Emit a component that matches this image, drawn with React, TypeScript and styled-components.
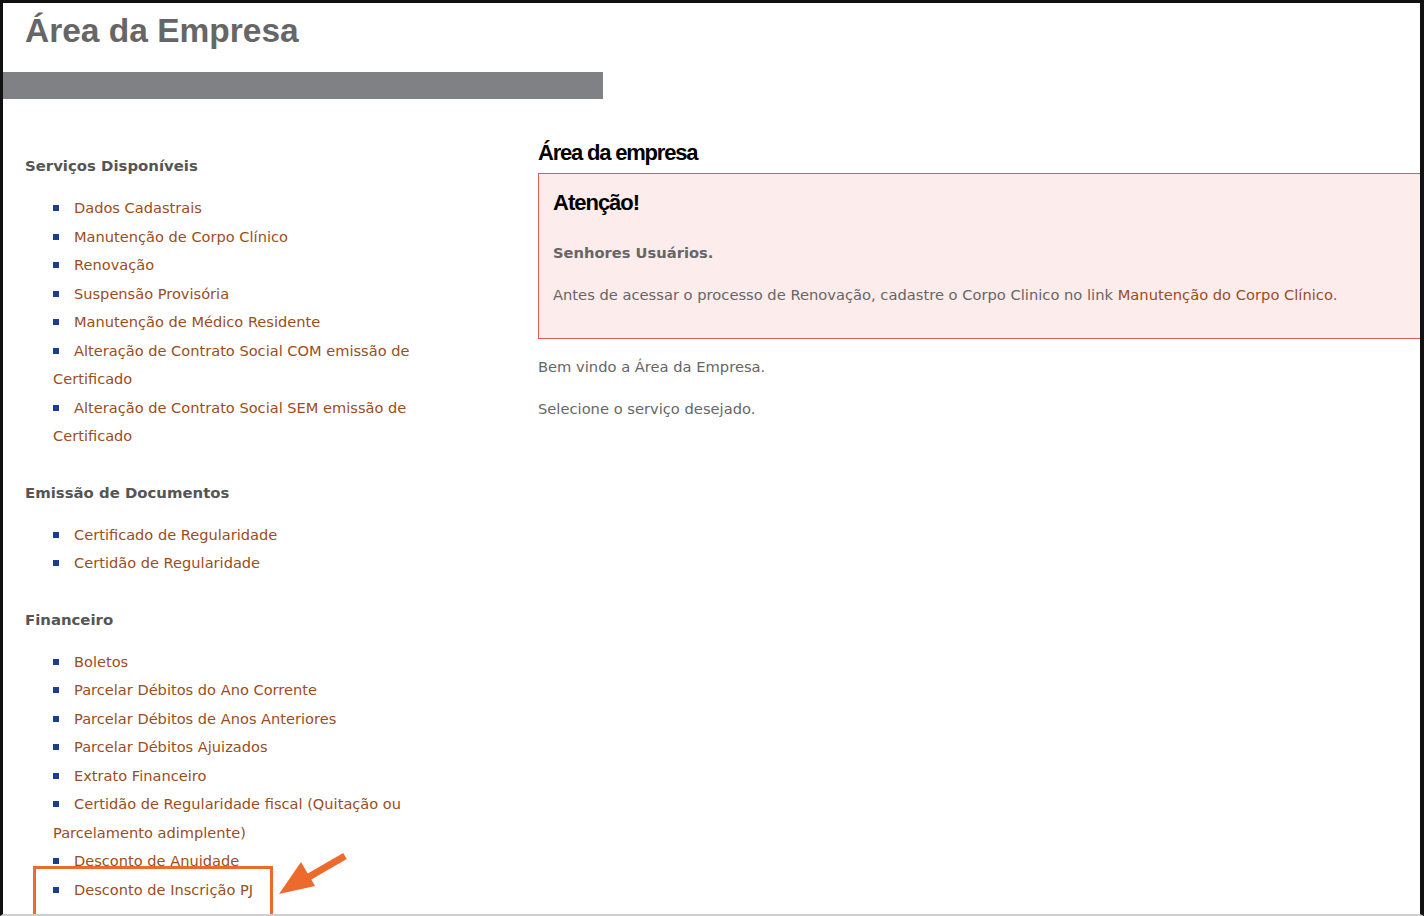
import React from 'react'
import styled, { createGlobalStyle } from 'styled-components'

const GlobalStyle = createGlobalStyle`
  html, body {
    margin: 0;
    padding: 0;
    background: #fff;
  }
`

const servicos = [
  'Dados Cadastrais',
  'Manutenção de Corpo Clínico',
  'Renovação',
  'Suspensão Provisória',
  'Manutenção de Médico Residente',
  'Alteração de Contrato Social COM emissão de Certificado',
  'Alteração de Contrato Social SEM emissão de Certificado',
]

const documentos = ['Certificado de Regularidade', 'Certidão de Regularidade']

const financeiro = [
  'Boletos',
  'Parcelar Débitos do Ano Corrente',
  'Parcelar Débitos de Anos Anteriores',
  'Parcelar Débitos Ajuizados',
  'Extrato Financeiro',
  'Certidão de Regularidade fiscal (Quitação ou Parcelamento adimplente)',
  'Desconto de Anuidade',
  'Desconto de Inscrição PJ',
]

const App = () => {
  return (
    <>
      <GlobalStyle />
      <Frame>
        <Header>
          <PageTitle>Área da Empresa</PageTitle>
          <GrayBar />
        </Header>

        <Columns>
          <Sidebar>
            <MenuSection title="Serviços Disponíveis" items={servicos} />
            <MenuSection title="Emissão de Documentos" items={documentos} />
            <MenuSection title="Financeiro" items={financeiro} />
          </Sidebar>

          <Content>
            <ContentTitle>Área da empresa</ContentTitle>
            <AlertBox>
              <AlertTitle>Atenção!</AlertTitle>
              <AlertStrong>Senhores Usuários.</AlertStrong>
              <Paragraph>
                Antes de acessar o processo de Renovação, cadastre o Corpo Clinico no link{' '}
                <Link href="#">Manutenção do Corpo Clínico</Link>.
              </Paragraph>
            </AlertBox>
            <Paragraph>Bem vindo a Área da Empresa.</Paragraph>
            <Paragraph>Selecione o serviço desejado.</Paragraph>
          </Content>
        </Columns>

        {/* destaque no item "Desconto de Inscrição PJ" */}
        <HighlightBox />
        <Arrow viewBox="0 0 80 50" width="80" height="50">
          <line x1="68" y1="4" x2="30" y2="26" stroke="#ec6a2c" strokeWidth="7" />
          <polygon points="2,42 24,10 38,34" fill="#ec6a2c" />
        </Arrow>
      </Frame>
    </>
  )
}

export default App

const MenuSection = ({ title, items }: { title: string; items: string[] }) => (
  <Section>
    <SectionTitle>{title}</SectionTitle>
    <Menu>
      {items.map((item) => (
        <MenuItem key={item}>
          <Link href="#">{item}</Link>
        </MenuItem>
      ))}
    </Menu>
  </Section>
)

const Frame = styled.div`
  position: relative;
  box-sizing: border-box;
  width: 1424px;
  height: 916px;
  border-top: 3px solid #111;
  border-left: 3px solid #111;
  border-right: 4px solid #111;
  border-bottom: 2px solid #cfcfcf;
  overflow: hidden;
  background: #fff;
`

const Header = styled.div`
  display: flex;
  flex-direction: column;
`

const PageTitle = styled.h1`
  margin: 0;
  padding: 5px 0 0 22px;
  height: 62px;
  box-sizing: border-box;
  font-family: 'Liberation Sans', Arial, sans-serif;
  font-weight: 700;
  font-size: 33.5px;
  line-height: 46px;
  color: #666;
`

const GrayBar = styled.div`
  margin-top: 7px;
  width: 600px;
  height: 27px;
  background: #808184;
`

const Columns = styled.div`
  display: grid;
  grid-template-columns: 535px 1fr;
`

const Sidebar = styled.div`
  padding: 53px 0 0 22px;
  display: flex;
  flex-direction: column;
  gap: 28px;
`

const Section = styled.div`
  display: flex;
  flex-direction: column;
`

const SectionTitle = styled.h3`
  margin: 0 0 14px;
  font-family: Tahoma, 'DejaVu Sans', Verdana, sans-serif;
  font-weight: 700;
  font-size: 14.9px;
  line-height: 28px;
  color: #555;
`

const Menu = styled.ul`
  margin: 0;
  padding: 0 0 0 28px;
  list-style: none;
  width: 382px;
`

const MenuItem = styled.li`
  font-family: Tahoma, 'DejaVu Sans', Verdana, sans-serif;
  font-size: 14.6px;
  line-height: 28.5px;

  &::before {
    content: '';
    display: inline-block;
    width: 6px;
    height: 6px;
    margin: 0 15px 2px 0;
    background: #1c3d8f;
    vertical-align: middle;
  }
`

const Link = styled.a`
  color: #9b4d22;
  text-decoration: none;
`

const Content = styled.div`
  padding-top: 39px;
  font-family: Tahoma, 'DejaVu Sans', Verdana, sans-serif;
  font-size: 14.7px;
  color: #666;
`

const ContentTitle = styled.h2`
  margin: 0 0 5px;
  font-family: 'Liberation Sans', Arial, sans-serif;
  font-weight: 700;
  font-size: 22px;
  letter-spacing: -1.2px;
  line-height: 30px;
  color: #000;
`

const AlertBox = styled.div`
  width: 920px;
  box-sizing: border-box;
  padding: 15px 14px 15px;
  margin-bottom: 14px;
  background: #fcecec;
  border: 1px solid #e35a5a;
`

const AlertTitle = styled.h3`
  margin: 0 0 22px;
  font-family: 'Liberation Sans', Arial, sans-serif;
  font-weight: 700;
  font-size: 22px;
  letter-spacing: -1px;
  line-height: 28px;
  color: #000;
`

const AlertStrong = styled.p`
  margin: 0 0 14px;
  font-weight: 700;
  line-height: 28px;
  color: #666;
`

const Paragraph = styled.p`
  margin: 0 0 14px;
  line-height: 28px;
`

const HighlightBox = styled.div`
  position: absolute;
  left: 30px;
  top: 863px;
  width: 234px;
  height: 60px;
  border: 3px solid #ec6a2c;
`

const Arrow = styled.svg`
  position: absolute;
  left: 274px;
  top: 849px;
`
